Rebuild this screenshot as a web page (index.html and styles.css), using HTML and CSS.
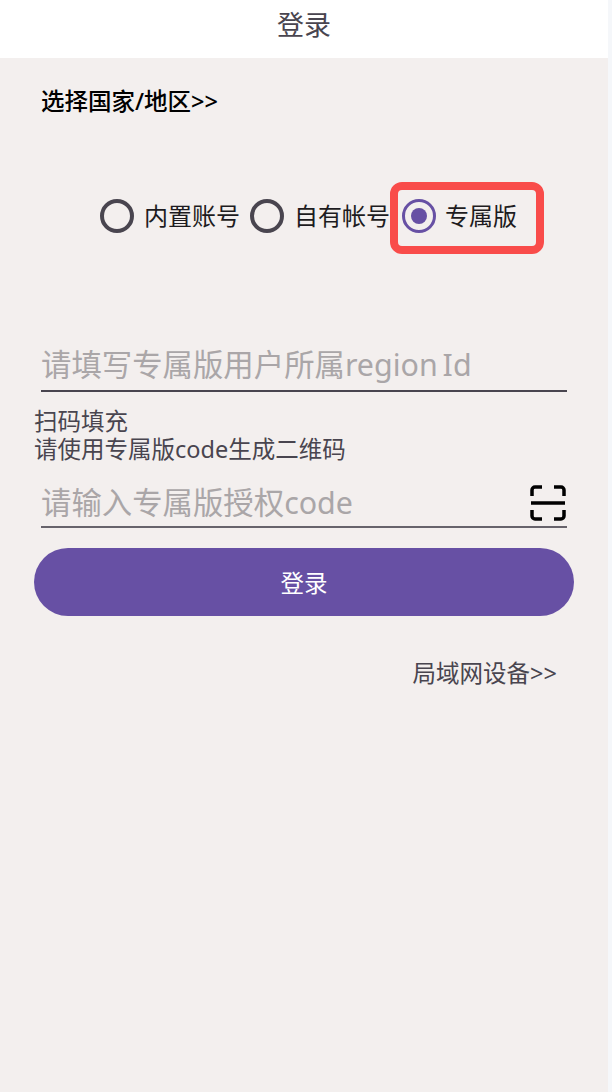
FILE: index.html
```html
<!DOCTYPE html>
<html lang="zh-CN">
<head>
    <meta charset="UTF-8">
    <meta name="viewport" content="width=device-width, initial-scale=1.0">
    <title>登录</title>
    <link rel="stylesheet" href="styles.css">
</head>
<body>
    <div class="container">
        <div class="header">登录</div>
        <div class="content">
            <div class="region-link">选择国家/地区&gt;&gt;</div>

            <div class="radio-row">
                <label class="radio-item">
                    <span class="radio"></span>
                    <span>内置账号</span>
                </label>
                <label class="radio-item">
                    <span class="radio"></span>
                    <span>自有帐号</span>
                </label>
                <label class="radio-item selected">
                    <span class="radio"></span>
                    <span>专属版</span>
                    <span class="highlight"></span>
                </label>
            </div>

            <div class="field region-field">
                <span class="placeholder">请填写专属版用户所属region Id</span>
            </div>

            <div class="scan-hint">扫码填充<br>请使用专属版code生成二维码</div>

            <div class="field code-field">
                <span class="placeholder">请输入专属版授权code</span>
                <svg class="scan-icon" viewBox="0 0 36 36">
                    <path d="M2 11V5a3 3 0 0 1 3-3h7M24 2h7a3 3 0 0 1 3 3v6M2 25v6a3 3 0 0 0 3 3h7M24 34h7a3 3 0 0 0 3-3v-6M1 18h34"/>
                </svg>
            </div>

            <button class="login-btn" type="button">登录</button>

            <div class="lan-link">局域网设备&gt;&gt;</div>
        </div>
    </div>
</body>
</html>
```

FILE: styles.css
```css
* {
    margin: 0;
    padding: 0;
    box-sizing: border-box;
}

body {
    font-family: "Noto Sans", "Noto Sans CJK SC", sans-serif;
    background-color: #f5f7fa;
    height: 1092px;
    overflow: hidden;
}

.container {
    width: 608px;
    height: 1092px;
    background: #f3efee;
    display: flex;
    flex-direction: column;
}

.header {
    height: 58px;
    background: #ffffff;
    color: #49454f;
    font-size: 27px;
    line-height: 50px;
    text-align: center;
}

.content {
    flex-grow: 1;
    padding: 0 34px;
    display: flex;
    flex-direction: column;
}

.region-link {
    margin-top: 30px;
    padding-left: 7px;
    color: #000000;
    font-size: 23.5px;
    font-weight: 500;
    line-height: 26px;
}

.radio-row {
    margin-top: 77px;
    padding-left: 66px;
    display: flex;
    align-items: center;
    height: 50px;
}

.radio-item {
    position: relative;
    display: flex;
    align-items: center;
    gap: 10px;
    height: 34px;
    margin-right: 10px;
    color: #1d1b20;
    font-size: 24px;
    line-height: 30px;
}

.radio {
    width: 34px;
    height: 34px;
    border: 4px solid #49454f;
    border-radius: 50%;
    display: flex;
    align-items: center;
    justify-content: center;
}

.selected {
    margin-left: 2px;
    gap: 9px;
}

.selected .radio {
    border-width: 3px;
    border-color: #6750a4;
}

.selected .radio::after {
    content: '';
    width: 16px;
    height: 16px;
    border-radius: 50%;
    background: #6750a4;
}

.highlight {
    position: absolute;
    left: -12px;
    top: -17px;
    width: 154px;
    height: 72px;
    border: 8px solid #f94c4a;
    border-radius: 12px;
}

.field {
    margin-left: 7px;
    width: 526px;
    display: flex;
    align-items: center;
    justify-content: space-between;
    border-bottom: 2px solid #49454f;
}

.placeholder {
    color: #aaa6a8;
    font-size: 30.4px;
    word-spacing: -3px;
}

.region-field {
    margin-top: 99px;
    height: 52px;
    padding-bottom: 4px;
}

.scan-hint {
    margin-top: 15px;
    color: #49454f;
    font-size: 23.5px;
    line-height: 28px;
}

.code-field {
    margin-top: 17px;
    height: 48px;
    padding-bottom: 4px;
    border-bottom-color: #67636b;
}

.scan-icon {
    width: 36px;
    height: 36px;
    margin: 3px 1px 0 0;
    fill: none;
    stroke: #000000;
    stroke-width: 3.5;
}

.login-btn {
    margin-top: 20px;
    width: 540px;
    height: 68px;
    border: none;
    border-radius: 34px;
    background: #6750a4;
    color: #ffffff;
    font-family: inherit;
    font-size: 23.5px;
}

.lan-link {
    margin-top: 41px;
    padding-right: 17px;
    text-align: right;
    color: #49454f;
    font-size: 23.5px;
    line-height: 32px;
}
```
